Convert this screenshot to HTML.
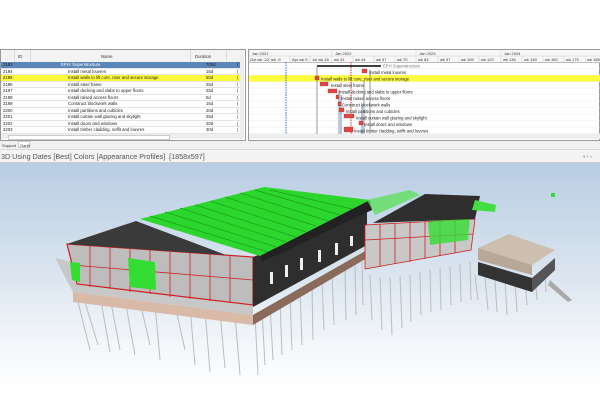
<!DOCTYPE html><html><head><style>
body{margin:0;width:600px;height:414px;background:#fff;position:relative;overflow:hidden;font-family:"Liberation Sans",sans-serif}
.a{position:absolute}
.t{font-size:4.3px;color:#333;white-space:nowrap}
.r{position:absolute;left:0;width:243px;height:6.5px;border-bottom:1px solid #e4e4e4;box-sizing:border-box}
.r span{position:absolute;font-size:4.3px;line-height:6px;color:#222;white-space:nowrap}
</style></head><body>
<div class="a" style="left:0;top:49px;width:246px;height:92px;border:1px solid #999;box-sizing:border-box;background:#fff"></div>
<div class="a" style="left:1px;top:50px;width:243px;height:12px;background:#f3f3f3;border-bottom:1px solid #ccc"></div>
<div class="a t" style="left:18px;top:54px">ID</div>
<div class="a t" style="left:101px;top:54px">Name</div>
<div class="a t" style="left:195px;top:54px">Duration</div>
<div class="a" style="left:14px;top:50px;width:1px;height:84px;background:#ddd"></div>
<div class="a" style="left:30px;top:50px;width:1px;height:84px;background:#ddd"></div>
<div class="a" style="left:190px;top:50px;width:1px;height:84px;background:#ddd"></div>
<div class="a" style="left:226px;top:50px;width:1px;height:84px;background:#ddd"></div>
<div id="rows"></div>
<div class="a" style="left:1px;top:134px;width:243px;height:5px;background:#eee"></div>
<div class="a" style="left:8px;top:135px;width:160px;height:3px;background:#fff;border:1px solid #ccc"></div>
<div class="a" style="left:240px;top:55px;width:4px;height:78px;background:#eee"></div>
<div class="a" style="left:0;top:141px;width:600px;height:8px;background:#f0f0f0"></div>
<div class="a t" style="left:2px;top:143px;font-size:4px">Support</div>
<div class="a" style="left:18px;top:141px;width:12px;height:7px;background:#fff;border:1px solid #ccc;box-sizing:border-box"></div>
<div class="a t" style="left:20px;top:143px;font-size:4px">Gantt</div>
<div class="a" style="left:0;top:149px;width:600px;height:1px;background:#d8d8d8"></div>
<div class="a" style="left:0;top:150px;width:600px;height:13px;background:#f4f4f4;border-bottom:1px solid #ccc;box-sizing:border-box"></div>
<div class="a" style="left:1px;top:152px;font-size:7.2px;color:#555;white-space:nowrap">3D Using Dates [Best] Colors [Appearance Profiles]&nbsp;&nbsp;[1858x597]</div>
<div class="a t" style="left:583px;top:154px;color:#999">▾ × ×</div>
<div class="a" style="left:248px;top:49px;width:352px;height:92px;border:1px solid #999;box-sizing:border-box;background:#fff"></div>
<div class="a" style="left:249px;top:50px;width:351px;height:12px;background:#f7f7f7;border-bottom:1px solid #bbb"></div>
<div class="a" style="left:249px;top:75px;width:351px;height:6.5px;background:#fdfd3c"></div>
<div class="a" style="left:249px;top:134px;width:351px;height:5px;background:#eee"></div>
<svg class="a" style="left:249px;top:50px" width="351" height="84">
<g stroke="#ccc" stroke-width=".5">
<line x1="0" y1="6" x2="351" y2="6"/>
<path d="M0 0V12M21 6V12M41 6V12M61 6V12M83 0V12M104 6V12M125 6V12M146 6V12M167 0V12M189 6V12M210 6V12M230 6V12M252 0V12M273 6V12M294 6V12M315 6V12M337 6V12"/>
<path d="M0 18.5H351M0 25H351M0 31.5H351M0 38H351M0 44.5H351M0 51H351M0 57.5H351M0 64H351M0 70.5H351M0 77H351M0 83.5H351" stroke="#eee"/>
</g>
<g font-size="4" fill="#333" font-family="Liberation Sans">
<text x="3" y="5">Jan 2021</text><text x="86" y="5">Jan 2022</text><text x="170" y="5">Jan 2023</text><text x="255" y="5">Jan 2024</text>
<text x="1" y="11">Oct wk -22</text><text x="22" y="11">wk -9</text><text x="43" y="11">Apr wk 5</text><text x="63" y="11">Jul wk 18</text><text x="85" y="11">wk 31</text><text x="106" y="11">wk 44</text><text x="127" y="11">wk 57</text><text x="148" y="11">wk 70</text><text x="169" y="11">wk 83</text><text x="191" y="11">wk 97</text><text x="212" y="11">wk 109</text><text x="232" y="11">wk 122</text><text x="254" y="11">wk 136</text><text x="275" y="11">wk 149</text><text x="296" y="11">wk 162</text><text x="317" y="11">wk 175</text><text x="338" y="11">wk 188</text>
</g>
<line x1="37" y1="12" x2="37" y2="84" stroke="#2a6fd0" stroke-dasharray="1.5 1" stroke-width="1"/>
<line x1="102" y1="12" x2="102" y2="84" stroke="#c33" stroke-dasharray="1.5 1" stroke-width="1"/>
<path d="M68 16H132" stroke="#000" stroke-width="1.5"/>
<path d="M68 16V84M115 30V84M121 20V84M90 40V84" stroke="#555" stroke-width=".6"/>
<path d="M92 45V84M113 55V84" stroke="#3a6fd0" stroke-width=".8"/>
<g fill="#e04444" stroke="#933" stroke-width=".3">
<rect x="113" y="19" width="5" height="4"/><rect x="66" y="26" width="4" height="4"/><rect x="71" y="32" width="8" height="4"/><rect x="79" y="39" width="9" height="4"/><rect x="87" y="45" width="3" height="4"/><rect x="89" y="52" width="3" height="4"/><rect x="90" y="58" width="5" height="4"/><rect x="95" y="64" width="10" height="4"/><rect x="110" y="71" width="4" height="4"/><rect x="95" y="77" width="9" height="5"/>
</g>
<g font-size="4.2" fill="#222" font-family="Liberation Sans">
<text x="134" y="17.5" fill="#777">EPH Superstructure</text><text x="120" y="24">Install metal louvres</text><text x="72" y="30.5">Install walls to lift core, riser and secure storage</text><text x="82" y="37">Install steel frame</text><text x="90" y="43.5">Install decking and slabs to upper floors</text><text x="92" y="50">Install raised access floors</text><text x="93" y="56.5">Construct blockwork walls</text><text x="97" y="63">Install partitions and cubicles</text><text x="107" y="69.5">Install curtain wall glazing and skylight</text><text x="115" y="76">Install doors and windows</text><text x="105" y="82.5">Install timber cladding, soffit and louvres</text>
</g>
</svg>
<div class="a" style="left:0;top:163px;width:600px;height:230px;background:linear-gradient(#b8cde3 0%,#d8e3ee 45%,#f4f7fa 80%,#fff 100%)"></div>
<svg class="a" style="left:0;top:0" width="600" height="414">
<g stroke="#bcbcbc" stroke-width="1">
<path d="M75 290L90 350M82 292L98 345M100 295L110 352M110 297L120 350M125 300L135 355M140 302L150 345M155 304L160 360M175 305L185 350M190 307L195 365M205 310L210 372M220 312L225 368M235 315L240 375M255 315L258 375M262 310L265 365M270 305L273 360M280 300L282 355M290 295L292 350M300 290L302 345M312 285L313 340M322 280L324 330M332 275L334 325M345 270L346 320M355 265L356 315M362 262L363 305"/>
<path d="M370 275L372 320M380 278L382 330M390 278L392 335M400 276L402 328M410 275L411 322M420 272L421 315M430 270L431 312M440 268L441 310M450 266L451 305M460 264L461 302M470 262L471 300"/>
<path d="M475 275L478 300M485 278L488 310M495 280L497 312M505 280L507 315M515 282L517 312M525 280L527 305M535 275L537 300M545 272L546 292"/>
</g>
<polygon points="73,292 253,315 253,325 73,302" fill="#d9b9a8"/>
<polygon points="253,315 367,250 367,258 253,325" fill="#8a6a5a"/>
<polygon points="55,258 73,292 253,315 253,305" fill="#c8c8c8"/>
<polygon points="67,244 253,257 253,305 77,284" fill="#bdbdbd"/>
<polygon points="67,244 253,257 253,305 77,284" fill="none" stroke="#d02020" stroke-width="1.2"/>
<g stroke="#d02020" stroke-width=".8"><path d="M72 265L253 280M90 246V287M110 247V289M130 249V292M150 250V294M170 252V297M190 253V299M210 254V301M230 255V303"/></g>
<polygon points="128,258 155,262 156,290 130,287" fill="#33dd33"/>
<polygon points="70,262 80,263 80,282 72,280" fill="#33dd33"/>
<polygon points="253,257 367,212 367,245 253,307" fill="#2e2e2e"/>
<g fill="#eee"><rect x="270" y="272" width="3" height="12"/><rect x="285" y="265" width="3" height="12"/><rect x="300" y="258" width="3" height="12"/><rect x="318" y="250" width="3" height="12"/><rect x="335" y="243" width="3" height="12"/><rect x="350" y="236" width="3" height="10"/></g>
<polygon points="67,244 136,221 226,255 253,257" fill="#3a3a3a"/>
<polygon points="140,219 264,187 370,200 260,256" fill="#2dd62d"/>
<g stroke="#1aa01a" stroke-width=".7"><path d="M150 216L268 252M165 212L276 247M180 208L286 242M195 205L296 237M210 201L306 232M225 197L316 226M240 193L328 221M255 190L340 215M270 190L352 209"/></g>
<polygon points="260,256 370,200 372,210 262,262" fill="#222"/>
<polygon points="367,200 410,190 420,195 375,215" fill="#5fe05f" opacity=".8"/>
<polygon points="365,225 475,219 471,250 365,269" fill="#c8c8c8"/>
<g stroke="#d02020" stroke-width=".8" fill="none"><path d="M365 225L475 219 471 250 365 269Z M365 240L473 234M380 224V266M395 223V264M410 222V262M425 221V259M440 221V256M455 220V253"/></g>
<polygon points="428,222 470,215 468,240 430,245" fill="#33dd33" opacity=".8"/>
<polygon points="373,223 425,194 480,196 475,219" fill="#2e2e2e"/>
<polygon points="475,200 496,205 495,212 472,210" fill="#44dd44"/>
<polygon points="478,248 509,234 555,250 532,265" fill="#cdbfb0"/>
<polygon points="478,248 532,265 532,275 478,260" fill="#b8a898"/>
<polygon points="478,262 532,278 532,292 478,275" fill="#333"/>
<polygon points="532,278 555,258 555,270 532,292" fill="#555"/>
<polygon points="550,280 572,300 568,302 548,285" fill="#aaa"/>
<rect x="551" y="193" width="4" height="4" fill="#33dd33"/>
</svg>
<script>
var d=[["2193","EPH: Superstructure","700d",1],["2194","Install metal louvres","15d"],["2195","Install walls to lift core, riser and secure storage","50d",2],["2196","Install steel frame","25d"],["2197","Install decking and slabs to upper floors","25d"],["2198","Install raised access floors","5d"],["2199","Construct blockwork walls","15d"],["2200","Install partitions and cubicles","20d"],["2201","Install curtain wall glazing and skylight","25d"],["2202","Install doors and windows","20d"],["2203","Install timber cladding, soffit and louvres","30d"]];
var h="";d.forEach(function(r,i){var bg=r[3]==1?"#5b87b8":r[3]==2?"#fbfb3c":"#fff";var c=r[3]==1?"#fff":"#222";
h+='<div class="r" style="top:'+(62+i*6.5)+'px;left:1px;background:'+bg+'"><span style="left:2px">'+r[0]+'</span><span style="left:'+(r[3]==1?60:67)+'px;color:'+c+'">'+r[1]+'</span><span style="left:205px">'+r[2]+'</span><span style="left:236px">(</span></div>';});
document.getElementById("rows").innerHTML=h;
</script>
</body></html>
